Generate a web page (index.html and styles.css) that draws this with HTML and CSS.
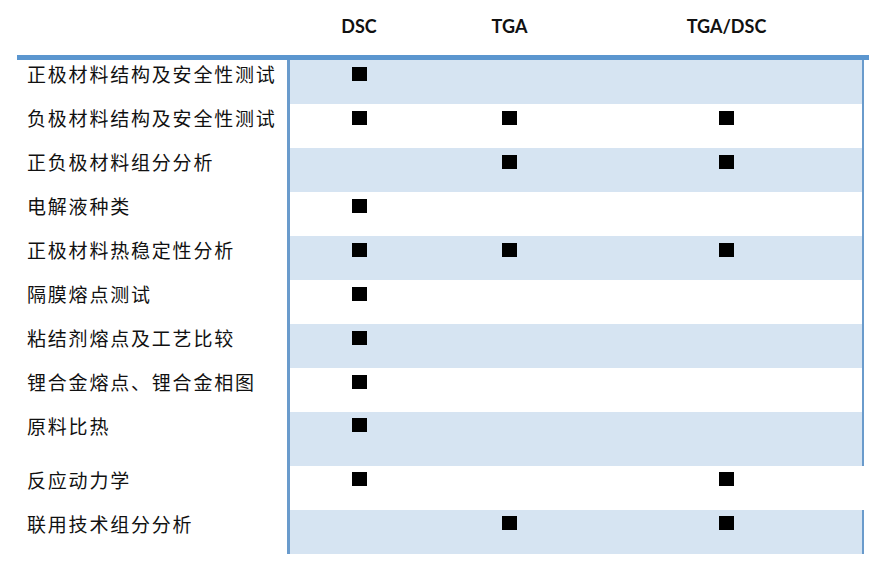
FILE: index.html
```html
<!DOCTYPE html>
<html lang="zh-CN">
<head>
<meta charset="utf-8">
<title>热分析应用</title>
<link rel="stylesheet" href="styles.css">
</head>
<body>
<div class="table">
  <div class="head">
    <div></div>
    <div class="hcell">DSC</div>
    <div class="hcell">TGA</div>
    <div class="hcell">TGA/DSC</div>
  </div>
  <div class="rule"></div>

  <div class="row">
    <div class="label">正极材料结构及安全性测试</div>
    <div class="data blue"><div class="cell"><span class="mark"></span></div><div class="cell"></div><div class="cell"></div></div>
  </div>
  <div class="row">
    <div class="label">负极材料结构及安全性测试</div>
    <div class="data"><div class="cell"><span class="mark"></span></div><div class="cell"><span class="mark"></span></div><div class="cell"><span class="mark"></span></div></div>
  </div>
  <div class="row">
    <div class="label">正负极材料组分分析</div>
    <div class="data blue"><div class="cell"></div><div class="cell"><span class="mark"></span></div><div class="cell"><span class="mark"></span></div></div>
  </div>
  <div class="row">
    <div class="label">电解液种类</div>
    <div class="data"><div class="cell"><span class="mark"></span></div><div class="cell"></div><div class="cell"></div></div>
  </div>
  <div class="row">
    <div class="label">正极材料热稳定性分析</div>
    <div class="data blue"><div class="cell"><span class="mark"></span></div><div class="cell"><span class="mark"></span></div><div class="cell"><span class="mark"></span></div></div>
  </div>
  <div class="row">
    <div class="label">隔膜熔点测试</div>
    <div class="data"><div class="cell"><span class="mark"></span></div><div class="cell"></div><div class="cell"></div></div>
  </div>
  <div class="row">
    <div class="label">粘结剂熔点及工艺比较</div>
    <div class="data blue"><div class="cell"><span class="mark"></span></div><div class="cell"></div><div class="cell"></div></div>
  </div>
  <div class="row">
    <div class="label">锂合金熔点、锂合金相图</div>
    <div class="data"><div class="cell"><span class="mark"></span></div><div class="cell"></div><div class="cell"></div></div>
  </div>
  <div class="row tall">
    <div class="label">原料比热</div>
    <div class="data blue"><div class="cell low"><span class="mark"></span></div><div class="cell"></div><div class="cell"></div></div>
  </div>
  <div class="row">
    <div class="label">反应动力学</div>
    <div class="data open"><div class="cell low"><span class="mark"></span></div><div class="cell"></div><div class="cell low"><span class="mark"></span></div></div>
  </div>
  <div class="row">
    <div class="label">联用技术组分分析</div>
    <div class="data blue"><div class="cell low"></div><div class="cell low"><span class="mark"></span></div><div class="cell low"><span class="mark"></span></div></div>
  </div>
</div>
</body>
</html>
```

FILE: styles.css
```css
html, body {
  margin: 0;
  padding: 0;
  background: #ffffff;
}

body {
  font-family: "Noto Sans CJK SC", "Noto Sans", sans-serif;
  color: #111111;
}

.table {
  margin-left: 17px;
  width: 852px;
}

.head {
  display: grid;
  grid-template-columns: 273px 138px 163px 271px;
  height: 55px;
  align-items: center;
}

.hcell {
  text-align: center;
  font-family: "Lato", "Open Sans", sans-serif;
  font-weight: 700;
  font-size: 18px;
  line-height: 20px;
  padding-bottom: 4px;
  color: #111111;
}

.rule {
  height: 5px;
  background: #5b96cf;
}

.row {
  display: grid;
  grid-template-columns: 270px 577px;
  height: 44px;
}

.row.tall {
  height: 54px;
}

.label {
  padding-left: 10px;
  padding-top: 2px;
  font-size: 19px;
  line-height: 24px;
  letter-spacing: 1.8px;
  white-space: nowrap;
}

.data {
  display: grid;
  grid-template-columns: 138px 163px 271px;
  border-left: 3px solid #6a9bcc;
  border-right: 2px solid #6a9bcc;
  background: #ffffff;
}

.data.blue {
  background: #d6e4f2;
}

.data.open {
  border-right-color: transparent;
}

.cell {
  display: flex;
  justify-content: center;
  align-items: flex-start;
  padding-top: 7px;
}

.cell.low {
  padding-top: 6px;
}

.mark {
  display: block;
  width: 15px;
  height: 14px;
  background: #000000;
}
```
